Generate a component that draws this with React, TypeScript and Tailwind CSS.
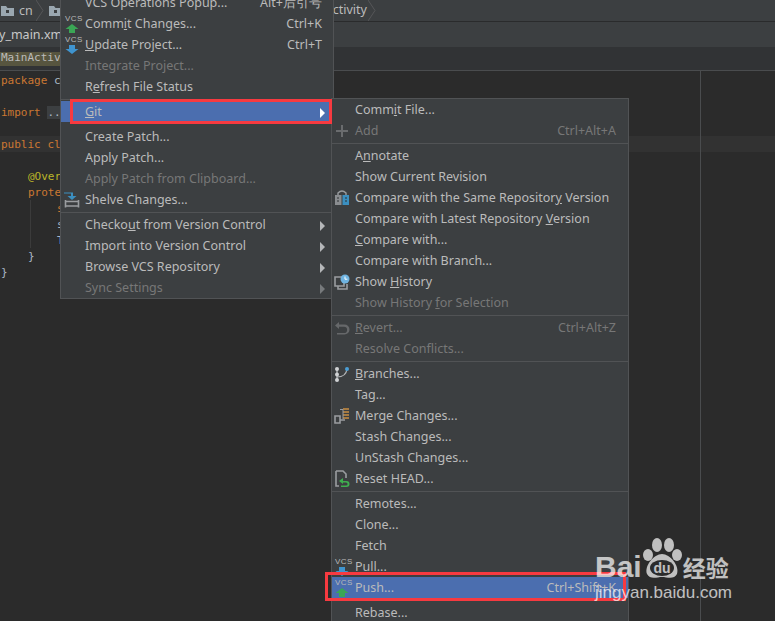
import React from "react";

function Vcs({ color, up }: { color: string; up: boolean }) {
  return (
    <span className="relative inline-block h-[18px] w-[16px]">
      <span className="absolute left-[1px] top-0 font-['Liberation_Sans',sans-serif] text-[8px] leading-[8px] tracking-[0.5px] text-[#b8b8b8]">VCS</span>
      <svg className="absolute left-[1px] top-[9px]" width="14" height="9" viewBox="0 0 14 9">
        {up ? (
          <path d="M7 0 L13.5 5 H10 V9 H4 V5 H0.5 Z" fill={color} />
        ) : (
          <path d="M4 0 H10 V4 H13.5 L7 9 L0.5 4 H4 Z" fill={color} />
        )}
      </svg>
    </span>
  );
}

function Shelve() {
  return (
    <svg width="16" height="16" viewBox="0 0 16 16">
      <path d="M0 0.5 H9 V4 H12.5 L8 8 L3.5 4 H7 V1.5 H0 Z" fill="#3b8fc0" />
      <path d="M1.5 8 V15.5 M14.5 8 V15.5 M1 9.5 H15 M1 14 H15" stroke="#9a9da0" strokeWidth="1.6" fill="none" />
    </svg>
  );
}

function Plus() {
  return (
    <svg width="14" height="14" viewBox="0 0 14 14">
      <path d="M7 1 V13 M1 7 H13" stroke="#6a6c6e" strokeWidth="2" />
    </svg>
  );
}

function CompareIcon() {
  return (
    <svg width="16" height="16" viewBox="0 0 16 16">
      <path d="M4 6 V3 Q8 -1 12 3 V6" fill="none" stroke="#9a9da0" strokeWidth="1.4" />
      <rect x="1" y="5" width="6.5" height="10" fill="#8a8d90" />
      <rect x="8.5" y="5" width="6.5" height="10" fill="#3b8fc0" />
      <path d="M3 8 H5 M3 11 H5 M11 8 H13 M11 11 H13" stroke="#2d3033" />
    </svg>
  );
}

function HistoryIcon() {
  return (
    <svg width="16" height="16" viewBox="0 0 16 16">
      <path d="M1 3 H10 V12 H1 Z M4 12 V15 H13 V10" fill="none" stroke="#9a9da0" strokeWidth="1.6" />
      <circle cx="11" cy="5" r="4.5" fill="#6fb3e0" />
      <path d="M11 2.5 V5.2 H13.4" stroke="#fff" fill="none" />
    </svg>
  );
}

function RevertIcon() {
  return (
    <svg width="16" height="14" viewBox="0 0 16 14">
      <path d="M5 1 L1 4.5 L5 8 V5.8 H10 A3 3 0 0 1 10 12 H3 V13.5 H10.5 A4.6 4.6 0 0 0 10.5 3.5 H5 Z" fill="#66686a" />
    </svg>
  );
}

function BranchIcon() {
  return (
    <svg width="16" height="16" viewBox="0 0 16 16">
      <path d="M3 2 V14" stroke="#b4b6b8" strokeWidth="1.4" />
      <path d="M3 11 Q12 11 13 3" stroke="#b4b6b8" strokeWidth="1.2" fill="none" />
      <circle cx="3" cy="3" r="2" fill="#d0d2d4" />
      <circle cx="3" cy="14" r="2" fill="#d0d2d4" />
      <circle cx="3" cy="8.5" r="2" fill="#d0d2d4" />
      <circle cx="13" cy="3" r="2" fill="#4b9fd5" />
    </svg>
  );
}

function MergeIcon() {
  return (
    <svg width="16" height="16" viewBox="0 0 16 16">
      <path d="M1 8 H6 V15 H1 Z M6 12 H11" fill="none" stroke="#9a9da0" strokeWidth="1.6" />
      <path d="M9 1 H15 M9 4 H15 M9 7 H15 M9 10 H15" stroke="#c98f42" strokeWidth="1.7" />
      <path d="M6 1.5 H9 V11" stroke="#9a9da0" fill="none" />
    </svg>
  );
}

function ResetIcon() {
  return (
    <svg width="16" height="18" viewBox="0 0 16 18">
      <path d="M2 1 H9 L12 4 V8 M2 1 V16 H5" fill="none" stroke="#9a9da0" strokeWidth="1.6" />
      <path d="M9 8 L5 11 L9 14 V12.4 H12 A1.6 1.6 0 0 1 12 15.6 H7 V17 H12.5 A3 3 0 0 0 12.5 11 H9 Z" fill="#3fae4f" />
    </svg>
  );
}

function Arrow({ dim, white }: { dim?: boolean; white?: boolean }) {
  return (
    <span className={`h-0 w-0 border-y-[5px] border-l-[5px] border-y-transparent ${white ? "border-l-white" : dim ? "border-l-[#777a7c]" : "border-l-[#b5b7b9]"}`} />
  );
}

type Row = {
  label?: React.ReactNode;
  key_?: string;
  icon?: React.ReactNode;
  dim?: boolean;
  sub?: boolean;
  active?: boolean;
  sep?: boolean;
  bare?: boolean;
};

function MenuRow({ r, pad, keyGap, iconLeft }: { r: Row; pad: string; keyGap: string; iconLeft: string }) {
  if (r.sep) {
    return r.bare ? (
      <div className="h-[4px]" />
    ) : (
      <div className="flex h-[4px] items-center">
        <div className="h-px w-full bg-[#515355]" />
      </div>
    );
  }
  return (
    <div
      className={`relative flex h-[21px] items-center whitespace-nowrap pt-[2px] ${pad} ${r.active ? "bg-[#4b6eaf]" : ""} ${r.dim ? "text-[#777777]" : "text-[#bbbbbb]"}`}
    >
      {r.icon && <span className={`absolute top-1/2 flex w-[18px] -translate-y-1/2 justify-center ${iconLeft}`}>{r.icon}</span>}
      <span className="flex-1">{r.label}</span>
      {r.key_ && <span className={keyGap}>{r.key_}</span>}
      {r.sub && <Arrow dim={r.dim} white={r.active} />}
    </div>
  );
}

const left: Row[] = [
  { label: "VCS Operations Popup...", key_: "Alt+后引号" },
  { label: <>Comm<u>i</u>t Changes...</>, key_: "Ctrl+K", icon: <Vcs color="#3aa655" up /> },
  { label: <><u>U</u>pdate Project...</>, key_: "Ctrl+T", icon: <Vcs color="#3f94cf" up={false} /> },
  { label: "Integrate Project...", dim: true },
  { label: <>R<u>e</u>fresh File Status</> },
  { sep: true },
  { label: <><u>G</u>it</>, sub: true, active: true },
  { sep: true, bare: true },
  { label: "Create Patch..." },
  { label: "Apply Patch..." },
  { label: "Apply Patch from Clipboard...", dim: true },
  { label: "Shelve Changes...", icon: <Shelve /> },
  { sep: true },
  { label: <>Checko<u>u</u>t from Version Control</>, sub: true },
  { label: "Import into Version Control", sub: true },
  { label: "Browse VCS Repository", sub: true },
  { label: "Sync Settings", sub: true, dim: true },
];

const right: Row[] = [
  { label: <>Comm<u>i</u>t File...</> },
  { label: "Add", key_: "Ctrl+Alt+A", dim: true, icon: <Plus /> },
  { sep: true },
  { label: <>A<u>n</u>notate</> },
  { label: "Show Current Revision" },
  { label: <>Compare with the Same Repositor<u>y</u> Version</>, icon: <CompareIcon /> },
  { label: <>Compare with Latest Repository <u>V</u>ersion</> },
  { label: <><u>C</u>ompare with...</> },
  { label: "Compare with Branch..." },
  { label: <>Show <u>H</u>istory</>, icon: <HistoryIcon /> },
  { label: <>Show History <u>f</u>or Selection</>, dim: true },
  { sep: true },
  { label: <><u>R</u>evert...</>, key_: "Ctrl+Alt+Z", dim: true, icon: <RevertIcon /> },
  { label: "Resolve Conflicts...", dim: true },
  { sep: true },
  { label: <><u>B</u>ranches...</>, icon: <BranchIcon /> },
  { label: "Tag..." },
  { label: "Merge Changes...", icon: <MergeIcon /> },
  { label: "Stash Changes..." },
  { label: "UnStash Changes..." },
  { label: "Reset HEAD...", icon: <ResetIcon /> },
  { sep: true },
  { label: "Remotes..." },
  { label: "Clone..." },
  { label: "Fetch" },
  { label: "Pull...", icon: <Vcs color="#3f94cf" up={false} /> },
  { label: "Push...", key_: "Ctrl+Shift+K", active: true, icon: <Vcs color="#3aa655" up /> },
  { sep: true, bare: true },
  { label: "Rebase..." },
];

function Folder() {
  return (
    <svg width="13" height="10" viewBox="0 0 13 10" className="shrink-0">
      <path d="M0 0 H5 L6.5 2 H13 V10 H0 Z" fill="#9aa7b0" />
      <rect x="5" y="4" width="3" height="3" fill="#3c3f41" />
    </svg>
  );
}

function Crumb() {
  return (
    <svg width="8" height="21" viewBox="0 0 8 21" className="shrink-0">
      <path d="M0 0 L7 10.5 L0 21" fill="none" stroke="#555759" />
    </svg>
  );
}

const K = ({ children }: { children: React.ReactNode }) => <span className="text-[#cc7832]">{children}</span>;

function Line({ children, indent, active }: { children?: React.ReactNode; indent?: string; active?: boolean }) {
  return <div className={`h-[16px] whitespace-nowrap ${indent ?? "pl-[1px]"} ${active ? "bg-[#323232]" : ""}`}>{children}</div>;
}

export default function App() {
  return (
    <div className="relative h-[621px] w-[775px] overflow-hidden bg-[#2b2b2b] font-['Noto_Sans',sans-serif] text-[12.5px] text-[#bbbbbb]">
      <div className="flex h-[22px] items-center border-b border-b-[#2a2b2c] bg-[#3c3f41] pl-[1px]">
        <Folder />
        <span className="ml-[5px] pt-[1px]">cn</span>
        <span className="ml-[3px]"><Crumb /></span>
        <span className="ml-[5px]"><Folder /></span>
        <span className="ml-auto mr-[399px] flex items-center gap-[1px]">Activity<Crumb /></span>
      </div>
      <div className="flex h-[25px] items-center bg-[#3c3f41] pt-[2px] text-[#c8c8c8]">
        <span className="-ml-[1px]">y_main.xml</span>
      </div>
      <div className="flex h-[24px] items-center border-b border-b-[#4a4c4e] bg-[#313335]">
        <span className="flex h-[14px] items-center bg-[#57553f] px-[1px] font-['DejaVu_Sans_Mono',monospace] text-[11px] text-[#bbbbbb]">MainActiv</span>
      </div>
      <div className="pt-[1px] font-['DejaVu_Sans_Mono',monospace] text-[11px] leading-[18px] text-[#a9b7c6]">
        <Line><K>package</K> c</Line>
        <Line />
        <Line><K>import</K> <span className="bg-[#3c3f41]">..</span></Line>
        <Line />
        <Line active><K>public</K> <K>cl</K></Line>
        <Line />
        <Line indent="pl-[28px]"><span className="text-[#bbb529]">@Over</span></Line>
        <Line indent="pl-[28px]"><K>prote</K></Line>
        <Line indent="pl-[57px]"><K>s</K></Line>
        <Line indent="pl-[57px]">s</Line>
        <Line indent="pl-[57px]">T</Line>
        <Line indent="pl-[28px]">{"}"}</Line>
        <Line>{"}"}</Line>
      </div>
      {/* indent guide and right margin guide, drawn over the editor */}
      <div className="absolute left-[30px] top-[200px] h-[48px] w-px bg-[#3b3b3b]" />
      <div className="absolute bottom-0 left-[700px] top-[71px] w-px bg-[#4a4c4e]" />

      {/* main menu */}
      <div className="absolute left-[60px] top-[-9px] w-[274px] border border-[#515355] bg-[#3c3f41]">
        {left.map((r, i) => (
          <MenuRow key={i} r={r} pad="pl-[24px] pr-[8px]" keyGap="mr-[3px]" iconLeft="left-[2px]" />
        ))}
      </div>

      {/* submenu */}
      <div className="absolute left-[331px] top-[98px] w-[298px] border border-[#515355] bg-[#3c3f41]">
        {right.map((r, i) => (
          <MenuRow key={i} r={r} pad="pl-[23px] pr-[12px]" keyGap="" iconLeft="left-[1px]" />
        ))}
      </div>

      {/* highlights */}
      <div className="absolute left-[70px] top-[99px] h-[25px] w-[262px] border-[3px] border-[#f73a40]" />
      <div className="absolute left-[325px] top-[572px] h-[29px] w-[301px] border-[3px] border-[#f73a40]" />

      {/* watermark */}
      <div className="absolute left-[595px] top-[538px] w-[140px] whitespace-nowrap text-white opacity-70">
        <div className="flex h-[42px] items-end">
          <span className="font-['Liberation_Sans',sans-serif] text-[30px] font-bold leading-[26px]">Bai</span>
          <svg width="40" height="42" viewBox="0 0 40 42" className="shrink-0">
            <ellipse cx="6" cy="17" rx="5" ry="6" fill="#fff" />
            <ellipse cx="15" cy="7" rx="5" ry="7" fill="#fff" />
            <ellipse cx="27" cy="7" rx="5" ry="7" fill="#fff" />
            <ellipse cx="35" cy="17" rx="5" ry="6" fill="#fff" />
            <path d="M20 16 C28 16 38 28 35 36 C32 42 25 39 20 39 C15 39 8 42 5 36 C2 28 12 16 20 16 Z" fill="#fff" />
            <ellipse cx="20" cy="30" rx="12" ry="8" fill="#2b2b2b" />
            <text x="20" y="35" textAnchor="middle" fontSize="14" fontWeight="700" fontFamily="Liberation Sans" fill="#fff">du</text>
          </svg>
          <span className="ml-[1px] font-['Noto_Sans_CJK_SC',sans-serif] text-[23px] font-bold leading-[26px]">经验</span>
        </div>
        <div className="mt-[3px] font-['Liberation_Sans',sans-serif] text-[17px] leading-[20px]">jingyan.baidu.com</div>
      </div>
    </div>
  );
}
